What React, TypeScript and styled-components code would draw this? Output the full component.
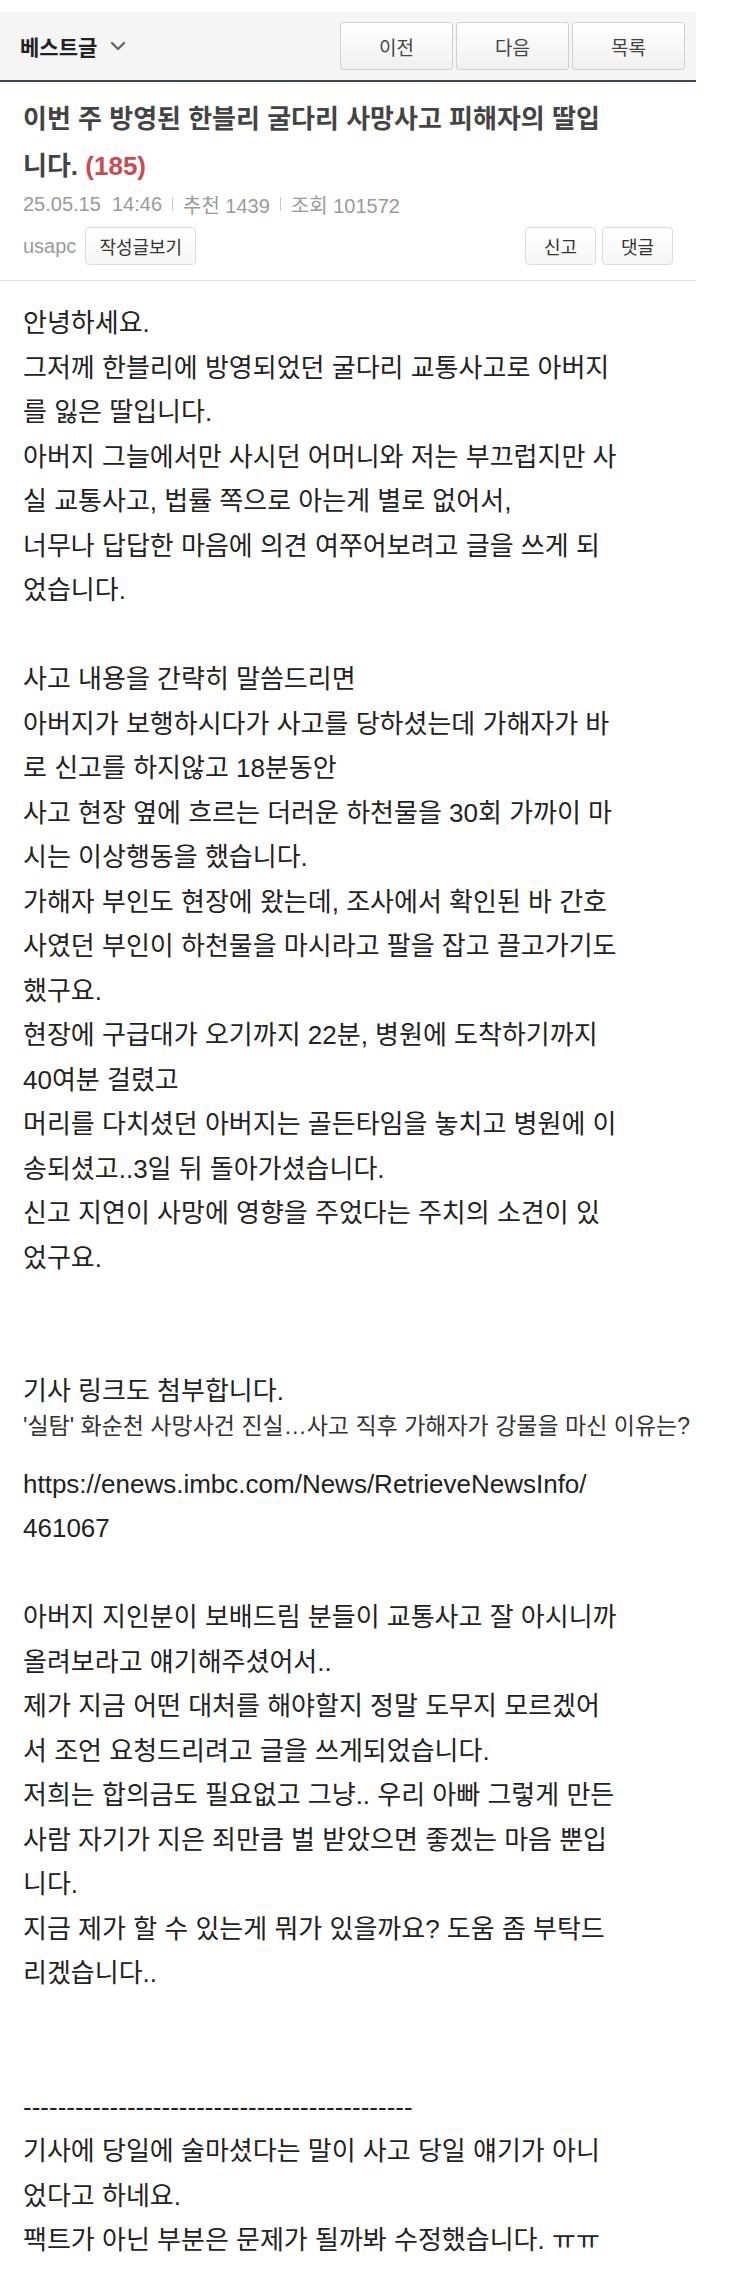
import React from "react";
import { styled, createGlobalStyle } from "styled-components";

const GlobalStyle = createGlobalStyle`
  body {
    margin: 0;
    background: #fff;
  }
`;

const FONT = `"Liberation Sans", "Noto Sans CJK KR", sans-serif`;

// 본문은 원본 줄바꿈 그대로 한 줄씩
const intro = [
  "안녕하세요.",
  "그저께 한블리에 방영되었던 굴다리 교통사고로 아버지",
  "를 잃은 딸입니다.",
  "아버지 그늘에서만 사시던 어머니와 저는 부끄럽지만 사",
  "실 교통사고, 법률 쪽으로 아는게 별로 없어서,",
  "너무나 답답한 마음에 의견 여쭈어보려고 글을 쓰게 되",
  "었습니다.",
];

const accident = [
  "사고 내용을 간략히 말씀드리면",
  "아버지가 보행하시다가 사고를 당하셨는데 가해자가 바",
  "로 신고를 하지않고 18분동안",
  "사고 현장 옆에 흐르는 더러운 하천물을 30회 가까이 마",
  "시는 이상행동을 했습니다.",
  "가해자 부인도 현장에 왔는데, 조사에서 확인된 바 간호",
  "사였던 부인이 하천물을 마시라고 팔을 잡고 끌고가기도",
  "했구요.",
  "현장에 구급대가 오기까지 22분, 병원에 도착하기까지",
  "40여분 걸렸고",
  "머리를 다치셨던 아버지는 골든타임을 놓치고 병원에 이",
  "송되셨고..3일 뒤 돌아가셨습니다.",
  "신고 지연이 사망에 영향을 주었다는 주치의 소견이 있",
  "었구요.",
];

const request = [
  "아버지 지인분이 보배드림 분들이 교통사고 잘 아시니까",
  "올려보라고 얘기해주셨어서..",
  "제가 지금 어떤 대처를 해야할지 정말 도무지 모르겠어",
  "서 조언 요청드리려고 글을 쓰게되었습니다.",
  "저희는 합의금도 필요없고 그냥.. 우리 아빠 그렇게 만든",
  "사람 자기가 지은 죄만큼 벌 받았으면 좋겠는 마음 뿐입",
  "니다.",
  "지금 제가 할 수 있는게 뭐가 있을까요? 도움 좀 부탁드",
  "리겠습니다..",
];

const edit = [
  "기사에 당일에 술마셨다는 말이 사고 당일 얘기가 아니",
  "었다고 하네요.",
  "팩트가 아닌 부분은 문제가 될까봐 수정했습니다. ㅠㅠ",
];

function Lines({ lines }: { lines: string[] }) {
  return (
    <>
      {lines.map((line, i) => (
        <Line key={i}>{line}</Line>
      ))}
    </>
  );
}

export default function App() {
  return (
    <Page>
      <GlobalStyle />
      <TopBar>
        <BoardName>
          베스트글
          <svg width="16" height="10" viewBox="0 0 16 10">
            <path
              d="M2 2 L8 8 L14 2"
              fill="none"
              stroke="#666"
              strokeWidth="2.4"
              strokeLinecap="round"
              strokeLinejoin="round"
            />
          </svg>
        </BoardName>
        <NavGroup>
          <NavButton>이전</NavButton>
          <NavButton>다음</NavButton>
          <NavButton>목록</NavButton>
        </NavGroup>
      </TopBar>

      <ArticleHead>
        <Title>
          이번 주 방영된 한블리 굴다리 사망사고 피해자의 딸입
          <br />
          니다. <Count>(185)</Count>
        </Title>
        <Meta>
          <span>25.05.15&nbsp; 14:46</span>
          <MetaDivider />
          <span>추천 1439</span>
          <MetaDivider />
          <span>조회 101572</span>
        </Meta>
        <AuthorRow>
          <Nick>usapc</Nick>
          <SmallButton>작성글보기</SmallButton>
          <Actions>
            <SmallButton $wide>신고</SmallButton>
            <SmallButton $wide>댓글</SmallButton>
          </Actions>
        </AuthorRow>
      </ArticleHead>

      <Content>
        <Lines lines={intro} />
        <Blank />
        <Lines lines={accident} />
        <Blank />
        <Blank />
        <Line>기사 링크도 첨부합니다.</Line>
        <PreviewTitle>
          '실탐' 화순천 사망사건 진실…사고 직후 가해자가 강물을 마신 이유는?
        </PreviewTitle>
        <Line>https://enews.imbc.com/News/RetrieveNewsInfo/</Line>
        <Line>461067</Line>
        <Blank />
        <Lines lines={request} />
        <Blank />
        <Blank />
        <Line>{"-".repeat(45)}</Line>
        <Lines lines={edit} />
      </Content>
    </Page>
  );
}

const Page = styled.div`
  width: 696px;
  padding: 12px 0 21px;
  font-family: ${FONT};
  color: #222;
`;

const TopBar = styled.header`
  display: flex;
  align-items: center;
  justify-content: space-between;
  height: 68px;
  padding: 0 11px 0 20px;
  background: #f5f5f5;
  border-bottom: 2px solid #3b4757;
`;

const BoardName = styled.div`
  display: flex;
  align-items: center;
  gap: 13px;
  font-size: 21px;
  font-weight: 700;
  color: #222;
`;

const NavGroup = styled.div`
  display: flex;
  gap: 3px;
`;

const NavButton = styled.button`
  width: 113px;
  height: 48px;
  border: 1px solid #d0d0d0;
  border-radius: 3px;
  background: linear-gradient(#ffffff, #f0f0f0);
  font-family: ${FONT};
  font-size: 19px;
  color: #444;
  padding: 0;
`;

const ArticleHead = styled.section`
  padding: 14px 23px 15px;
  border-bottom: 1px solid #e0e0e0;
`;

const Title = styled.h1`
  margin: 0;
  font-size: 26px;
  font-weight: 700;
  line-height: 47px;
  color: #444;
`;

const Count = styled.span`
  color: #cc4a50;
`;

const Meta = styled.div`
  display: flex;
  align-items: center;
  height: 28px;
  font-size: 20px;
  color: #9a9a9a;
`;

const MetaDivider = styled.span`
  display: inline-block;
  width: 1px;
  height: 14px;
  margin: 0 10px;
  background: #c8c8c8;
`;

const AuthorRow = styled.div`
  display: flex;
  align-items: center;
  margin-top: 9px;
  height: 38px;
`;

const Nick = styled.span`
  font-size: 20px;
  color: #9a9a9a;
  margin-right: 9px;
`;

const SmallButton = styled.button<{ $wide?: boolean }>`
  height: 38px;
  ${({ $wide }) => ($wide ? "width: 71px;" : "padding: 0 13px;")}
  border: 1px solid #dcdcdc;
  border-radius: 4px;
  background: linear-gradient(#ffffff, #f6f6f6);
  font-family: ${FONT};
  font-size: 18px;
  color: #333;
`;

const Actions = styled.div`
  display: flex;
  gap: 6px;
  margin-left: auto;
`;

const Content = styled.article`
  padding: 20px 23px 0;
  font-size: 26px;
  line-height: 44.5px;
  color: #222;
`;

const Line = styled.div`
  white-space: nowrap;
`;

const Blank = styled.div`
  height: 44.5px;
`;

const PreviewTitle = styled.div`
  margin-bottom: 24px;
  font-size: 23px;
  line-height: 24px;
  color: #333;
  white-space: nowrap;
`;
